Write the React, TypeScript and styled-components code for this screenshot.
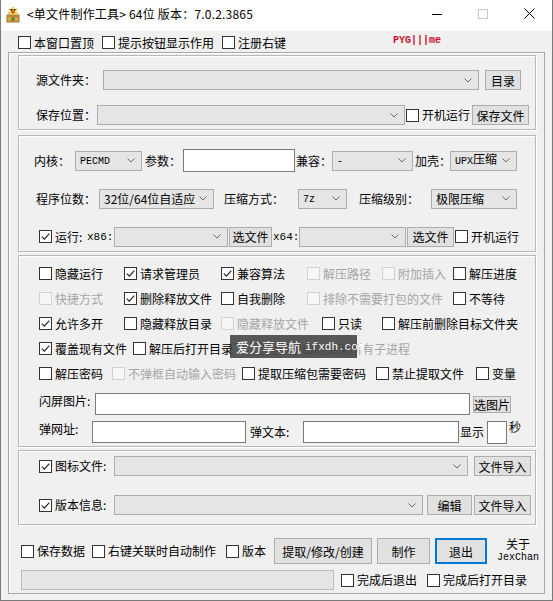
import React from "react";
import styled, { createGlobalStyle } from "styled-components";

const GlobalStyle = createGlobalStyle`
  html, body {
    margin: 0;
    padding: 0;
    background: #ffffff;
  }
  * {
    box-sizing: border-box;
  }
  body {
    font-family: "Noto Sans CJK SC", "Liberation Sans", sans-serif;
    font-size: 12px;
    line-height: 16px;
    color: #000;
  }
`;

const Window = styled.div`
  position: relative;
  width: 553px;
  height: 601px;
  background: #f0f0f0;
  border: 1px solid #7a7a7a;
  border-top: none;
  display: flex;
  flex-direction: column;
  overflow: hidden;
`;

const TitleBar = styled.div`
  height: 31px;
  background: #ffffff;
  display: flex;
  align-items: center;
  flex-shrink: 0;
`;

const TitleText = styled.span`
  margin-left: 6px;
  margin-top: -3px;
  font-size: 12px;
  letter-spacing: 0.2px;
  flex: 1;
`;

const WinButton = styled.div`
  width: 46px;
  height: 31px;
  display: flex;
  align-items: center;
  justify-content: center;
  margin-top: -4px;
`;

const TopRow = styled.div`
  height: 19px;
  margin-top: 2px;
  padding-left: 17px;
  display: flex;
  align-items: center;
  white-space: nowrap;
`;

const Brand = styled.span`
  font-family: "Liberation Mono", monospace;
  font-size: 10px;
  font-weight: bold;
  color: #c8102a;
  margin-top: -3px;
`;

const Frame = styled.div`
  margin: 0 7px;
  height: 542px;
  border: 1px solid #a8a8a8;
  box-shadow: inset 1px 1px 0 #ffffff;
  padding: 2px 8px 0 9px;
  display: flex;
  flex-direction: column;
`;

const Group = styled.div<{ $pt: number; $pb: number; $mt?: number }>`
  border: 1px solid #b9b9b9;
  box-shadow: inset 1px 1px 0 #ffffff, 1px 1px 0 #ffffff;
  padding: ${(p) => p.$pt}px 0 ${(p) => p.$pb}px;
  margin-top: ${(p) => p.$mt ?? 0}px;
  display: flex;
  flex-direction: column;
`;

const Row = styled.div<{ $h?: number; $pl?: number; $mt?: number }>`
  display: flex;
  align-items: center;
  height: ${(p) => p.$h ?? 23}px;
  padding-left: ${(p) => p.$pl ?? 0}px;
  margin-top: ${(p) => p.$mt ?? 0}px;
  white-space: nowrap;
  flex-shrink: 0;
`;

const Label = styled.span<{ $w?: number; $ml?: number; $dy?: number; $off?: boolean }>`
  width: ${(p) => (p.$w ? `${p.$w}px` : "auto")};
  margin-left: ${(p) => p.$ml ?? 0}px;
  position: relative;
  top: ${(p) => p.$dy ?? 0}px;
  flex-shrink: 0;
  color: ${(p) => (p.$off ? "#a6a6a6" : "#000")};
`;

const Mono = styled.span<{ $size?: number; $w?: number; $ml?: number }>`
  font-family: "Liberation Mono", monospace;
  font-size: ${(p) => p.$size ?? 10}px;
  width: ${(p) => (p.$w ? `${p.$w}px` : "auto")};
  margin-left: ${(p) => p.$ml ?? 0}px;
  flex-shrink: 0;
`;

const ComboBox = styled.div<{ $w: number; $ml?: number }>`
  width: ${(p) => p.$w}px;
  height: 20px;
  margin-left: ${(p) => p.$ml ?? 0}px;
  flex-shrink: 0;
  background: #e5e5e5;
  border: 1px solid #adadad;
  display: flex;
  align-items: center;
  padding-left: 4px;
`;

const ComboText = styled.span`
  flex: 1;
  overflow: hidden;
`;

const Chevron = styled.svg`
  margin-right: 6px;
  flex-shrink: 0;
`;

const Btn = styled.button<{ $w: number; $h?: number; $ml?: number; $focus?: boolean }>`
  width: ${(p) => p.$w}px;
  height: ${(p) => p.$h ?? 20}px;
  margin-left: ${(p) => p.$ml ?? 0}px;
  flex-shrink: 0;
  padding: 0;
  font-family: inherit;
  font-size: 12px;
  color: #000;
  background: #e1e1e1;
  border: ${(p) => (p.$focus ? "2px solid #0078d7" : "1px solid #adadad")};
  display: flex;
  align-items: center;
  justify-content: center;
  white-space: nowrap;
`;

const Field = styled.div<{ $w: number; $h?: number; $ml?: number }>`
  width: ${(p) => p.$w}px;
  height: ${(p) => p.$h ?? 22}px;
  margin-left: ${(p) => p.$ml ?? 0}px;
  flex-shrink: 0;
  background: #ffffff;
  border: 1px solid #7a7a7a;
`;

const CheckWrap = styled.div<{ $w?: number; $ml?: number }>`
  display: flex;
  align-items: center;
  width: ${(p) => (p.$w ? `${p.$w}px` : "auto")};
  margin-left: ${(p) => p.$ml ?? 0}px;
  flex-shrink: 0;
`;

const CheckBox = styled.span<{ $off?: boolean }>`
  width: 13px;
  height: 13px;
  border: 1px solid ${(p) => (p.$off ? "#d2d2d2" : "#333333")};
  background: ${(p) => (p.$off ? "#f6f6f6" : "#ffffff")};
  display: flex;
  align-items: center;
  justify-content: center;
  flex-shrink: 0;
`;

const CheckText = styled.span<{ $off?: boolean }>`
  margin-left: 3px;
  color: ${(p) => (p.$off ? "#a6a6a6" : "#000")};
`;

const BottomArea = styled.div`
  margin-top: 13px;
  display: flex;
  flex-direction: column;
`;

const Progress = styled.div<{ $w: number }>`
  width: ${(p) => p.$w}px;
  height: 20px;
  margin-left: 3px;
  background: #e6e6e6;
  border: 1px solid #bcbcbc;
  flex-shrink: 0;
`;

const About = styled.div`
  width: 42px;
  margin-left: 10px;
  display: flex;
  flex-direction: column;
  align-items: center;
  line-height: 14px;
`;

const Watermark = styled.div`
  position: absolute;
  left: 229px;
  top: 335px;
  width: 127px;
  height: 23px;
  background: rgba(52, 52, 52, 0.82);
  color: #ffffff;
  display: flex;
  align-items: center;
  padding-left: 6px;
  gap: 4px;
  white-space: nowrap;
`;

const WatermarkText = styled.span`
  font-size: 13px;
`;

type CheckProps = {
  label: React.ReactNode;
  checked?: boolean;
  off?: boolean;
  w?: number;
  ml?: number;
};

const Check: React.FC<CheckProps> = ({ label, checked, off, w, ml }) => (
  <CheckWrap $w={w} $ml={ml}>
    <CheckBox $off={off}>
      {checked && (
        <svg width="11" height="11" viewBox="0 0 11 11">
          <path d="M1.8 5.6 L4.3 8.1 L9.3 2.6" stroke="#222" strokeWidth="1.2" fill="none" />
        </svg>
      )}
    </CheckBox>
    <CheckText $off={off}>{label}</CheckText>
  </CheckWrap>
);

const Combo: React.FC<{ w: number; ml?: number; children?: React.ReactNode }> = ({ w, ml, children }) => (
  <ComboBox $w={w} $ml={ml}>
    <ComboText>{children}</ComboText>
    <Chevron width="8" height="5" viewBox="0 0 8 5">
      <polyline points="0.5,0.5 4,4 7.5,0.5" stroke="#6a6a6a" strokeWidth="1" fill="none" />
    </Chevron>
  </ComboBox>
);

const AppIcon = () => (
  <svg width="16" height="17" viewBox="0 0 16 17" style={{ marginLeft: 4, marginTop: -3 }}>
    <rect x="2" y="9" width="12" height="7" fill="#d9a441" stroke="#8a5a1a" strokeWidth="0.8" />
    <rect x="2" y="9" width="12" height="2" fill="#b9852e" />
    <path d="M8 1 L8 9 M4 3 L8 7 L12 3 M3 7 L13 7" stroke="#f2c21e" strokeWidth="1.6" />
    <circle cx="8" cy="6" r="1.6" fill="#e24a2a" />
    <rect x="6.5" y="11" width="3" height="4" fill="#5a8a3a" />
  </svg>
);

export default function App() {
  return (
    <Window>
      <GlobalStyle />
      <TitleBar>
        <AppIcon />
        <TitleText>&lt;单文件制作工具&gt; 64位 版本：7.0.2.3865</TitleText>
        <WinButton>
          <svg width="10" height="10" viewBox="0 0 10 10">
            <line x1="0" y1="5.5" x2="10" y2="5.5" stroke="#000" strokeWidth="1" />
          </svg>
        </WinButton>
        <WinButton>
          <svg width="10" height="10" viewBox="0 0 10 10">
            <rect x="0.5" y="0.5" width="9" height="9" stroke="#c8c8c8" strokeWidth="1" fill="none" />
          </svg>
        </WinButton>
        <WinButton>
          <svg width="11" height="11" viewBox="0 0 11 11">
            <path d="M0.5 0.5 L10.5 10.5 M10.5 0.5 L0.5 10.5" stroke="#000" strokeWidth="1" />
          </svg>
        </WinButton>
      </TitleBar>

      <TopRow>
        <Check label="本窗口置顶" w={84} />
        <Check label="提示按钮显示作用" w={120} />
        <Check label="注册右键" w={171} />
        <Brand>PYG|||me</Brand>
      </TopRow>

      <Frame>
        <Group $pt={14} $pb={4}>
          <Row $h={20} $pl={17}>
            <Label $w={67}>源文件夹：</Label>
            <Combo w={376} />
            <Btn $w={36} $ml={6}>目录</Btn>
          </Row>
          <Row $h={20} $pl={17} $mt={15}>
            <Label $w={61}>保存位置：</Label>
            <Combo w={308} />
            <Check label="开机运行" w={66} ml={1} />
            <Btn $w={57}>保存文件</Btn>
          </Row>
        </Group>

        <Group $pt={13} $pb={3} $mt={5}>
          <Row $pl={15}>
            <Label $w={41}>内核：</Label>
            <Combo w={67}>
              <Mono>PECMD</Mono>
            </Combo>
            <Label $w={38} $ml={3}>参数：</Label>
            <Field $w={112} $h={23} />
            <Label $w={36} $ml={1}>兼容：</Label>
            <Combo w={81}>
              <Mono>-</Mono>
            </Combo>
            <Label $w={35} $ml={2}>加壳：</Label>
            <Combo w={67}>
              <Mono>UPX</Mono>压缩
            </Combo>
          </Row>
          <Row $pl={17} $mt={15}>
            <Label $w={63}>程序位数：</Label>
            <Combo w={115}>32位/64位自适应</Combo>
            <Label $w={74} $ml={10}>压缩方式：</Label>
            <Combo w={49}>
              <Mono>7z</Mono>
            </Combo>
            <Label $w={72} $ml={12}>压缩级别：</Label>
            <Combo w={86}>极限压缩</Combo>
          </Row>
          <Row $pl={20} $mt={15}>
            <Check label="运行:" checked w={48} />
            <Mono $size={11} $w={27}>x86:</Mono>
            <Combo w={114} />
            <Btn $w={43} $ml={1}>选文件</Btn>
            <Mono $size={11} $w={26} $ml={1}>x64:</Mono>
            <Combo w={107} />
            <Btn $w={47} $ml={1}>选文件</Btn>
            <Check label="开机运行" ml={1} />
          </Row>
        </Group>

        <Group $pt={5} $pb={3} $mt={3}>
          <Row $h={25} $pl={20}>
            <Check label="隐藏运行" w={85} />
            <Check label="请求管理员" checked w={97} />
            <Check label="兼容算法" checked w={86} />
            <Check label="解压路径" off w={75} />
            <Check label="附加插入" off w={71} />
            <Check label="解压进度" />
          </Row>
          <Row $h={25} $pl={20}>
            <Check label="快捷方式" off w={85} />
            <Check label="删除释放文件" checked w={97} />
            <Check label="自我删除" w={86} />
            <Check label="排除不需要打包的文件" off w={146} />
            <Check label="不等待" />
          </Row>
          <Row $h={25} $pl={20}>
            <Check label="允许多开" checked w={85} />
            <Check label="隐藏释放目录" w={97} />
            <Check label="隐藏释放文件" off w={101} />
            <Check label="只读" w={60} />
            <Check label="解压前删除目标文件夹" />
          </Row>
          <Row $h={25} $pl={20}>
            <Check label="覆盖现有文件" checked w={94} />
            <Check label="解压后打开目录" w={117} />
            <Check label="程序退出时结束所有子进程" off />
          </Row>
          <Row $h={25} $pl={20}>
            <Check label="解压密码" w={73} />
            <Check label="不弹框自动输入密码" off w={130} />
            <Check label="提取压缩包需要密码" w={134} />
            <Check label="禁止提取文件" w={100} />
            <Check label="变量" />
          </Row>
          <Row $h={22} $pl={20} $mt={7}>
            <Label $w={56} $dy={-3}>闪屏图片:</Label>
            <Field $w={375} />
            <Btn $w={38} $h={17} $ml={3}>选图片</Btn>
          </Row>
          <Row $h={22} $pl={20} $mt={6}>
            <Label $w={53} $dy={-3}>弹网址:</Label>
            <Field $w={154} />
            <Label $w={53} $ml={4}>弹文本:</Label>
            <Field $w={156} />
            <Label $w={27} $ml={1}>显示</Label>
            <Field $w={20} $h={23} />
            <Label $ml={2} $dy={-5}>秒</Label>
          </Row>
        </Group>

        <Group $pt={5} $pb={9} $mt={3}>
          <Row $h={20} $pl={20}>
            <Check label="图标文件:" checked w={75} />
            <Combo w={354} />
            <Btn $w={57} $ml={6}>文件导入</Btn>
          </Row>
          <Row $h={20} $pl={20} $mt={19}>
            <Check label="版本信息:" checked w={75} />
            <Combo w={309} />
            <Btn $w={45} $ml={4}>编辑</Btn>
            <Btn $w={57} $ml={2}>文件导入</Btn>
          </Row>
        </Group>

        <BottomArea>
          <Row $h={26} $pl={3}>
            <Check label="保存数据" w={71} />
            <Check label="右键关联时自动制作" w={134} />
            <Check label="版本" w={48} />
            <Btn $w={98} $h={26}>提取/修改/创建</Btn>
            <Btn $w={53} $h={26} $ml={5}>制作</Btn>
            <Btn $w={52} $h={26} $ml={5} $focus>退出</Btn>
            <About>
              <span>关于</span>
              <Mono>JexChan</Mono>
            </About>
          </Row>
          <Row $h={20} $mt={6}>
            <Progress $w={313} />
            <Check label="完成后退出" w={86} ml={7} />
            <Check label="完成后打开目录" />
          </Row>
        </BottomArea>
      </Frame>

      <Watermark>
        <WatermarkText>爱分享导航</WatermarkText>
        <Mono $size={11}>ifxdh.com</Mono>
      </Watermark>
    </Window>
  );
}
